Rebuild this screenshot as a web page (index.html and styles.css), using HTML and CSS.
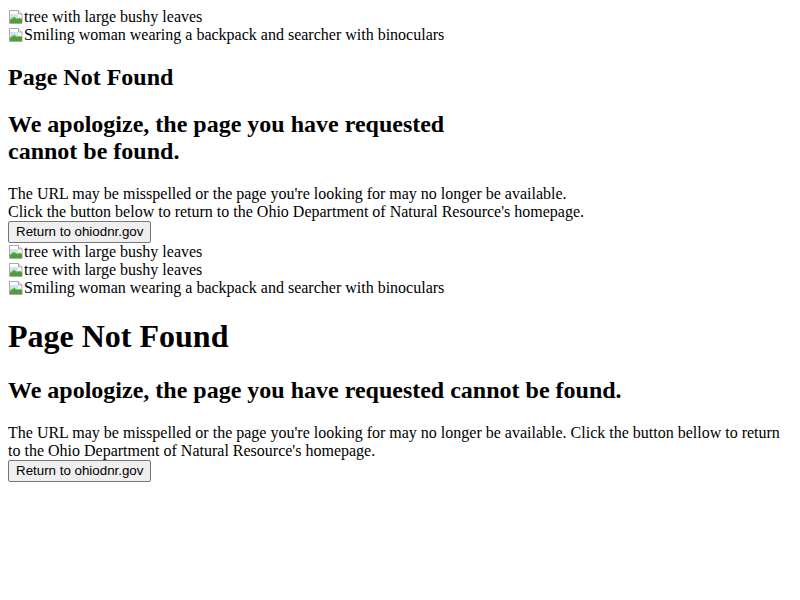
FILE: index.html
```html
<!DOCTYPE html>
<html lang="en">
<head>
  <meta charset="UTF-8">
  <meta name="viewport" content="width=device-width, initial-scale=1.0">
  <title>Page Not Found | Ohio Department of Natural Resources</title>
  <link rel="stylesheet" href="styles.css">
</head>
<body>

  <div class="notfound desktop">
    <div class="img-alt"><svg class="broken" viewBox="0 0 16 16"><path d="M1.5 1.5h9l3.5 3.5v9.5h-12.5z" fill="#fff" stroke="#a9a9a9"/><path d="M10.5 1.5v3.5h3.5" fill="#eee" stroke="#a9a9a9"/><path d="M2 5h8v9h-8z" fill="#cfe3f5"/><path d="M2 14l0-3 4-3 3 2 3-1 2 1v4z" fill="#4f9e3a"/><path d="M2 11l4-3 3 2 3-1" fill="none" stroke="#7cc35a"/></svg>tree with large bushy leaves</div>
    <div class="img-alt"><svg class="broken" viewBox="0 0 16 16"><path d="M1.5 1.5h9l3.5 3.5v9.5h-12.5z" fill="#fff" stroke="#a9a9a9"/><path d="M10.5 1.5v3.5h3.5" fill="#eee" stroke="#a9a9a9"/><path d="M2 5h8v9h-8z" fill="#cfe3f5"/><path d="M2 14l0-3 4-3 3 2 3-1 2 1v4z" fill="#4f9e3a"/><path d="M2 11l4-3 3 2 3-1" fill="none" stroke="#7cc35a"/></svg>Smiling woman wearing a backpack and searcher with binoculars</div>

    <div class="content">
      <h2>Page Not Found</h2>
      <h2 class="apology">We apologize, the page you have requested cannot be found.</h2>
      <p>The URL may be misspelled or the page you're looking for may no longer be available.<br>
      Click the button below to return to the Ohio Department of Natural Resource's homepage.</p>
      <button type="button">Return to ohiodnr.gov</button>
    </div>
  </div>

  <div class="notfound mobile">
    <div class="img-alt"><svg class="broken" viewBox="0 0 16 16"><path d="M1.5 1.5h9l3.5 3.5v9.5h-12.5z" fill="#fff" stroke="#a9a9a9"/><path d="M10.5 1.5v3.5h3.5" fill="#eee" stroke="#a9a9a9"/><path d="M2 5h8v9h-8z" fill="#cfe3f5"/><path d="M2 14l0-3 4-3 3 2 3-1 2 1v4z" fill="#4f9e3a"/><path d="M2 11l4-3 3 2 3-1" fill="none" stroke="#7cc35a"/></svg>tree with large bushy leaves</div>
    <div class="img-alt"><svg class="broken" viewBox="0 0 16 16"><path d="M1.5 1.5h9l3.5 3.5v9.5h-12.5z" fill="#fff" stroke="#a9a9a9"/><path d="M10.5 1.5v3.5h3.5" fill="#eee" stroke="#a9a9a9"/><path d="M2 5h8v9h-8z" fill="#cfe3f5"/><path d="M2 14l0-3 4-3 3 2 3-1 2 1v4z" fill="#4f9e3a"/><path d="M2 11l4-3 3 2 3-1" fill="none" stroke="#7cc35a"/></svg>tree with large bushy leaves</div>
    <div class="img-alt"><svg class="broken" viewBox="0 0 16 16"><path d="M1.5 1.5h9l3.5 3.5v9.5h-12.5z" fill="#fff" stroke="#a9a9a9"/><path d="M10.5 1.5v3.5h3.5" fill="#eee" stroke="#a9a9a9"/><path d="M2 5h8v9h-8z" fill="#cfe3f5"/><path d="M2 14l0-3 4-3 3 2 3-1 2 1v4z" fill="#4f9e3a"/><path d="M2 11l4-3 3 2 3-1" fill="none" stroke="#7cc35a"/></svg>Smiling woman wearing a backpack and searcher with binoculars</div>

    <h1>Page Not Found</h1>
    <h2>We apologize, the page you have requested cannot be found.</h2>
    <p>The URL may be misspelled or the page you're looking for may no longer be available. Click the button bellow to return to the Ohio Department of Natural Resource's homepage.</p>
    <button type="button">Return to ohiodnr.gov</button>
  </div>

</body>
</html>
```

FILE: styles.css
```css
body {
  margin: 8px;
  font-family: 'Liberation Serif', 'Times New Roman', serif;
  font-size: 16px;
  color: #000;
  background: #fff;
}

.img-alt {
  line-height: 18px;
}

.broken {
  width: 16px;
  height: 16px;
  vertical-align: -3px;
}

.desktop .apology {
  max-width: 450px;
}

.desktop p {
  margin-bottom: 0;
}

.mobile p {
  margin-bottom: 0;
}

button {
  font-family: 'Liberation Sans', Arial, sans-serif;
  font-size: 13.333px;
  color: #000;
  background-color: #efefef;
  border: 1px solid #767676;
  border-radius: 2px;
  padding: 2px 7px 3px;
}
```
